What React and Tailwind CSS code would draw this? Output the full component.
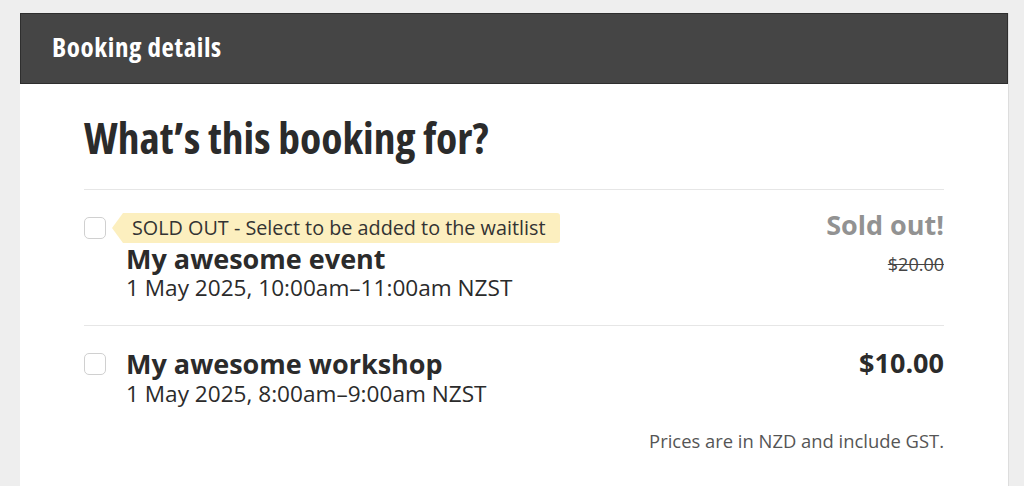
export default function App() {
  const body = { fontFamily: '"Open Sans", "Noto Sans", sans-serif' };
  const cond = { fontFamily: '"Open Sans", "Noto Sans", sans-serif', fontStretch: "75%" };
  return (
    <div className="min-h-[486px] bg-[#eeeeee] pt-[13px] pl-[20px] pr-[15px]" style={body}>
      <div className="bg-white border-r border-[#dddddd] min-h-[473px]">
        <div className="h-[71px] bg-[#454545] border border-[#2e2e2e] pl-[31px] pt-[19px]">
          <h1 className="text-white text-[27px] font-bold leading-none tracking-[0.6px]" style={cond}>Booking details</h1>
        </div>
        <div className="px-[64px]">
          <h2 className="text-[#2b2b2b] text-[43.5px] font-bold leading-[44px] pt-[32px] pb-[29px] border-b border-[#e6e6e6]" style={cond}>
            What’s this booking for?
          </h2>
          <div className="flex justify-between border-b border-[#e6e6e6] pt-[23px] pb-[24px]">
            <div className="flex gap-[20px]">
              <div className="w-[22px] h-[22px] mt-[4px] rounded-[5px] border border-[#d0d0d0] bg-white shrink-0"></div>
              <div className="flex flex-col items-start">
                <div className="-ml-[14px] flex items-center">
                  <span className="w-0 h-0 border-y-[15px] border-y-transparent border-r-[11px] border-r-[#fcefbf]"></span>
                  <span className="bg-[#fcefbf] text-[#333333] text-[19.8px] leading-[30px] pl-[9px] pr-[15px] rounded-r-[3px]">
                    SOLD OUT - Select to be added to the waitlist
                  </span>
                </div>
                <div className="text-[#2b2b2b] text-[27px] font-bold leading-[32px]">My awesome event</div>
                <div className="text-[#2b2b2b] text-[22.6px] leading-[26px]">1 May 2025, 10:00am–11:00am NZST</div>
              </div>
            </div>
            <div className="flex flex-col items-end">
              <div className="text-[#929292] text-[27px] font-bold leading-[28px] -mt-[2px]">Sold out!</div>
              <div className="text-[#444444] text-[18px] leading-[24px] line-through mt-[13px]">$20.00</div>
            </div>
          </div>
          <div className="flex justify-between pt-[22px]">
            <div className="flex gap-[20px]">
              <div className="w-[22px] h-[22px] mt-[5px] rounded-[5px] border border-[#d0d0d0] bg-white shrink-0"></div>
              <div className="flex flex-col">
                <div className="text-[#2b2b2b] text-[27px] font-bold leading-[32px]">My awesome workshop</div>
                <div className="text-[#2b2b2b] text-[22.6px] leading-[26px] mt-[1px]">1 May 2025, 8:00am–9:00am NZST</div>
              </div>
            </div>
            <div className="text-[#2b2b2b] text-[27px] font-bold leading-[32px] -mt-[1px]">$10.00</div>
          </div>
          <div className="text-right text-[#555555] text-[18.4px] leading-[24px] mt-[22px]">Prices are in NZD and include GST.</div>
        </div>
      </div>
    </div>
  );
}
